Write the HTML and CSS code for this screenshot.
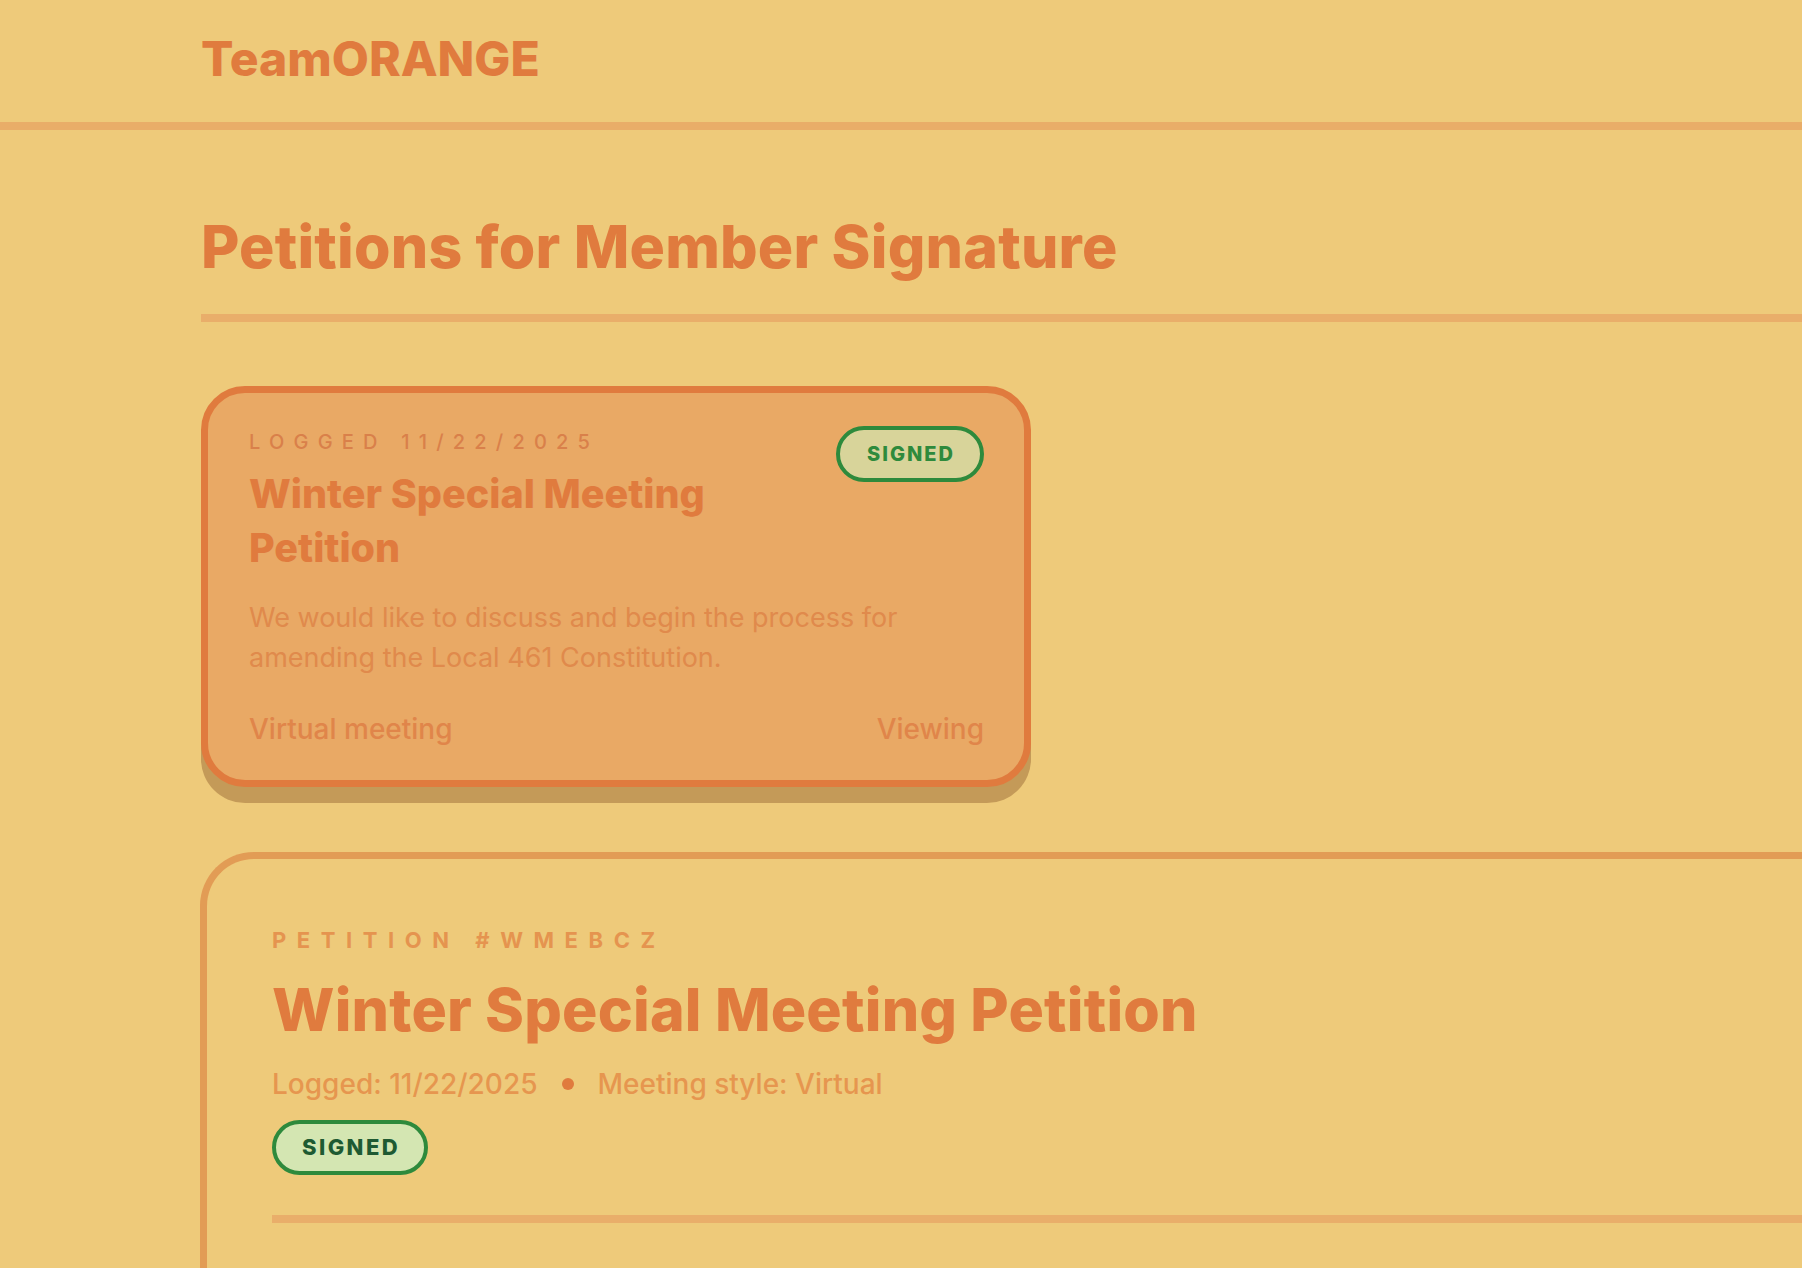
FILE: index.html
```html
<!DOCTYPE html>
<html lang="en">
<head>
<meta charset="utf-8">
<title>TeamORANGE – Petitions</title>
<link rel="stylesheet" href="styles.css">
</head>
<body>
<header class="site-header">
  <div class="brand">TeamORANGE</div>
</header>
<main class="page">
  <h1 class="page-title">Petitions for Member Signature</h1>

  <article class="petition-card">
    <div class="card-top">
      <div class="card-head">
        <div class="card-logged">Logged 11/22/2025</div>
        <h2 class="card-title">Winter Special Meeting Petition</h2>
      </div>
      <span class="badge badge-small">SIGNED</span>
    </div>
    <p class="card-desc">We would like to discuss and begin the process for amending the Local 461 Constitution.</p>
    <div class="card-foot">
      <span>Virtual meeting</span>
      <span>Viewing</span>
    </div>
  </article>

  <section class="detail">
    <div class="detail-label">Petition #WMEBCZ</div>
    <h2 class="detail-title">Winter Special Meeting Petition</h2>
    <div class="detail-meta">
      <span>Logged: 11/22/2025</span>
      <span class="dot"></span>
      <span>Meeting style: Virtual</span>
    </div>
    <span class="badge badge-large">SIGNED</span>
    <hr class="detail-rule">
  </section>
</main>
</body>
</html>
```

FILE: styles.css
```css
html, body {
  margin: 0;
  padding: 0;
}
body {
  background: #eeca7a;
  font-family: Inter, "Noto Sans", sans-serif;
  color: #e07b3e;
  overflow: hidden;
  height: 1268px;
}
.site-header {
  height: 130px;
  box-sizing: border-box;
  padding: 30px 0 0 201px;
  border-bottom: 8px solid #e9ad68;
}
.brand {
  font-size: 48px;
  line-height: 1.2;
  font-weight: 800;
  letter-spacing: 0;
}
.page {
  padding: 82px 0 0 201px;
  width: 1800px;
  display: flex;
  flex-direction: column;
  align-items: flex-start;
}
.page-title {
  margin: 0;
  align-self: stretch;
  font-size: 59px;
  line-height: 69px;
  font-weight: 800;
  letter-spacing: 0.2px;
  padding-bottom: 33px;
  border-bottom: 8px solid #e9ae6a;
}
.petition-card {
  margin-top: 64px;
  width: 830px;
  box-sizing: border-box;
  background: #e9a965;
  border: 7px solid #e07b3e;
  border-radius: 44px;
  box-shadow: 0 16px 0 #c49a58;
  padding: 33px 40px 33px 41px;
}
.card-top {
  display: flex;
  justify-content: space-between;
  align-items: flex-start;
  gap: 24px;
}
.card-logged {
  font-size: 20px;
  line-height: 32px;
  font-weight: 500;
  letter-spacing: 0.46em;
  text-transform: uppercase;
  color: #d9804a;
}
.card-title {
  margin: 9px 0 0;
  font-size: 39.5px;
  line-height: 54px;
  font-weight: 800;
  letter-spacing: 0;
}
.card-desc {
  margin: 23px 0 0;
  font-size: 27px;
  line-height: 40px;
  font-weight: 400;
  color: #e08a4c;
}
.card-foot {
  margin-top: 33px;
  display: flex;
  justify-content: space-between;
  font-size: 28px;
  line-height: 36px;
  font-weight: 500;
  color: #e0854a;
}
.badge {
  display: inline-block;
  border-radius: 999px;
  font-weight: 800;
  text-transform: uppercase;
  white-space: nowrap;
  box-sizing: border-box;
}
.badge-small {
  border: 4px solid #2e8a3c;
  background: #d8d49a;
  color: #2e8a3c;
  font-size: 20px;
  line-height: 48px;
  letter-spacing: 0.1em;
  padding: 0 25px 0 27px;
  height: 56px;
}
.badge-large {
  border: 4px solid #2e8a3c;
  background: #d4e6b2;
  color: #1e5a32;
  font-size: 22px;
  line-height: 47px;
  letter-spacing: 0.11em;
  padding: 0 24px 0 26px;
  height: 55px;
  margin-top: 18px;
}
.detail {
  margin-top: 65px;
  align-self: stretch;
  margin-left: -1px;
  border: 7px solid #e29c55;
  border-right: none;
  border-bottom: none;
  border-radius: 54px 0 0 0;
  padding: 67px 0 200px 65px;
  display: flex;
  flex-direction: column;
  align-items: flex-start;
}
.detail-label {
  font-size: 22px;
  line-height: 28px;
  font-weight: 700;
  letter-spacing: 0.48em;
  text-transform: uppercase;
  color: #e5944f;
}
.detail-title {
  margin: 21px 0 0;
  font-size: 59px;
  line-height: 70px;
  font-weight: 800;
  letter-spacing: 0.2px;
}
.detail-meta {
  margin-top: 21px;
  display: flex;
  align-items: center;
  gap: 24px;
  font-size: 28px;
  line-height: 36px;
  font-weight: 500;
  color: #e6964f;
}
.dot {
  width: 12px;
  height: 12px;
  border-radius: 50%;
  background: #e07b3e;
}
.detail-rule {
  align-self: stretch;
  margin: 40px 0 0;
  border: none;
  height: 8px;
  background: #e9ae6a;
}
```
